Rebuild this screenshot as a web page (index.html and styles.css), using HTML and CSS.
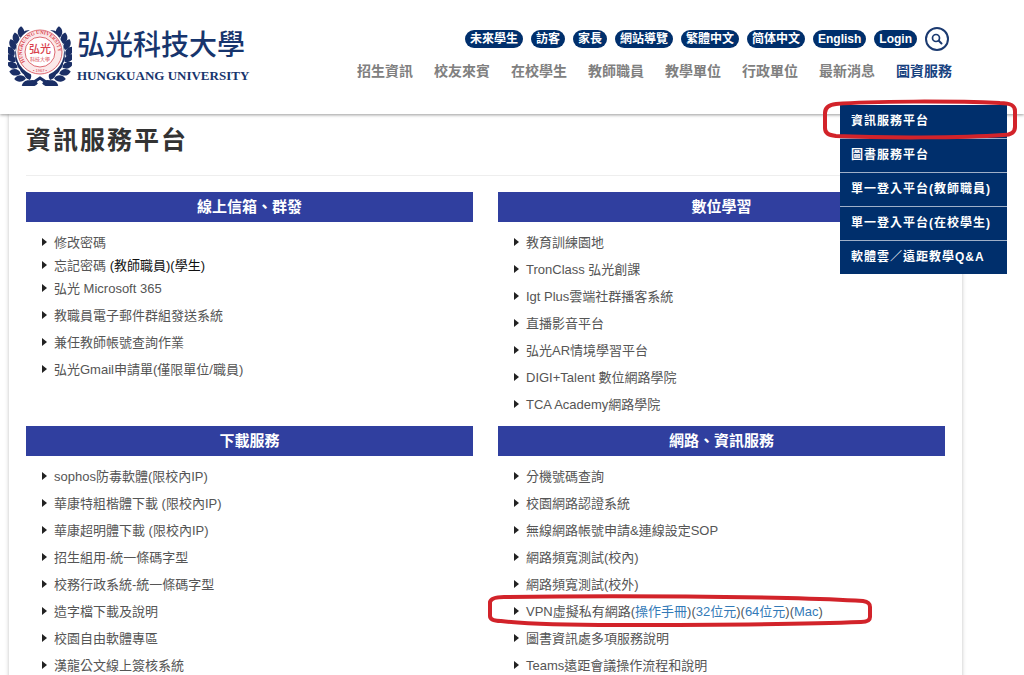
FILE: index.html
```html
<!DOCTYPE html>
<html lang="zh-Hant">
  <head>
    <meta charset="UTF-8" />
    <meta name="viewport" content="width=device-width, initial-scale=1.0" />
    <title>資訊服務平台</title>
    <link rel="stylesheet" href="styles.css">
  </head>
  <body>
    <header class="header">
      <a class="logo" href="#">
        <svg class="emblem" viewBox="0 0 64 62" aria-hidden="true">
          <defs>
            <path id="ring" d="M17 38 A18 18 0 1 1 47 38" />
            <path id="leaf" d="M0 1 C-5 0 -8 -4 -6 -9 C-1 -9 3 -4 0 1 Z" />
            <g id="branch" fill="#1b2f66">
              <use href="#leaf" transform="translate(29 59) rotate(-60)" />
              <use href="#leaf" transform="translate(24 58) rotate(-75)" />
              <use href="#leaf" transform="translate(17 54) rotate(-62)" />
              <use href="#leaf" transform="translate(12 49) rotate(-48)" />
              <use href="#leaf" transform="translate(9 43) rotate(-34)" />
              <use href="#leaf" transform="translate(7 37) rotate(-20)" />
              <use href="#leaf" transform="translate(6 31) rotate(-6)" />
              <use href="#leaf" transform="translate(7 25) rotate(8)" />
              <use href="#leaf" transform="translate(9 19) rotate(22)" />
              <use href="#leaf" transform="translate(13 13) rotate(34)" />
              <use href="#leaf" transform="translate(22 55) rotate(5)" />
              <use href="#leaf" transform="translate(17 50) rotate(15)" />
              <use href="#leaf" transform="translate(13 45) rotate(25)" />
              <use href="#leaf" transform="translate(10 39) rotate(38)" />
              <use href="#leaf" transform="translate(9 33) rotate(52)" />
              <use href="#leaf" transform="translate(9 27) rotate(66)" />
              <use href="#leaf" transform="translate(11 20) rotate(76)" />
              <use href="#leaf" transform="translate(14 14) rotate(80)" />
            </g>
          </defs>
          <use href="#branch" />
          <use href="#branch" transform="translate(64 0) scale(-1 1)" />
          <path d="M23 60 L32 54 L41 60" fill="none" stroke="#1b2f66" stroke-width="3" />
          <circle cx="32" cy="28" r="24" fill="#fff" />
          <circle cx="32" cy="28" r="22" fill="#fbe9ea" stroke="#dd6a72" stroke-width="1" />
          <circle cx="32" cy="28" r="15" fill="#fff" stroke="#dd6a72" stroke-width="1" />
          <text class="ring-text"><textPath href="#ring">HUNGKUANG UNIVERSITY</textPath></text>
          <text class="year" x="32" y="48">• 1967 •</text>
          <text class="seal" x="32" y="29">弘光</text>
          <text class="seal-sub" x="32" y="37">科技大學</text>
        </svg>
        <span class="school">
          <span class="school-zh">弘光科技大學</span>
          <span class="school-en">HUNGKUANG UNIVERSITY</span>
        </span>
      </a>
      <div class="menus">
        <div class="top-links">
          <a href="#">未來學生</a>
          <a href="#">訪客</a>
          <a href="#">家長</a>
          <a href="#">網站導覽</a>
          <a href="#">繁體中文</a>
          <a href="#">简体中文</a>
          <a href="#">English</a>
          <a href="#">Login</a>
          <button class="search" type="button" aria-label="搜尋">
            <svg viewBox="0 0 12 12" width="12" height="12">
              <circle cx="5" cy="5" r="3.5" fill="none" stroke="#1b3a70" stroke-width="1.7" />
              <path d="M7.8 7.8 L10.5 10.5" stroke="#1b3a70" stroke-width="2" stroke-linecap="round" />
            </svg>
          </button>
        </div>
        <nav>
          <ul class="main-nav">
            <li><a href="#">招生資訊</a></li>
            <li><a href="#">校友來賓</a></li>
            <li><a href="#">在校學生</a></li>
            <li><a href="#">教師職員</a></li>
            <li><a href="#">教學單位</a></li>
            <li><a href="#">行政單位</a></li>
            <li><a href="#">最新消息</a></li>
            <li class="active">
              <a href="#">圖資服務</a>
              <ul class="dropdown">
                <li><a href="#">資訊服務平台</a>
                  <svg class="mark mark-menu" viewBox="0 0 196 42" aria-hidden="true">
                    <path d="M14 5 C50 2 130 2 178 4 C190 4 193 7 193 12 L193 28 C193 33 190 36 181 36 C140 39 60 39 14 37 C6 36 3 34 3 29 L3 14 C3 9 6 6 14 5 Z" />
                  </svg>
                </li>
                <li><a href="#">圖書服務平台</a></li>
                <li><a href="#">單一登入平台(教師職員)</a></li>
                <li><a href="#">單一登入平台(在校學生)</a></li>
                <li><a href="#">軟體雲／遠距教學Q&amp;A</a></li>
              </ul>
            </li>
          </ul>
        </nav>
      </div>
    </header>

    <main class="container">
      <h1>資訊服務平台</h1>
      <div class="grid">
        <section>
          <h2>線上信箱、群發</h2>
          <ul class="list">
            <li><a href="#">修改密碼</a></li>
            <li class="tight"><a href="#">忘記密碼</a><span class="who"> (<a href="#">教師職員</a>)(<a href="#">學生</a>)</span></li>
            <li><a href="#">弘光 Microsoft 365</a></li>
            <li><a href="#">教職員電子郵件群組發送系統</a></li>
            <li><a href="#">兼任教師帳號查詢作業</a></li>
            <li><a href="#">弘光Gmail申請單(僅限單位/職員)</a></li>
          </ul>
        </section>
        <section>
          <h2>數位學習</h2>
          <ul class="list">
            <li><a href="#">教育訓練園地</a></li>
            <li><a href="#">TronClass 弘光創課</a></li>
            <li><a href="#">Igt Plus雲端社群播客系統</a></li>
            <li><a href="#">直播影音平台</a></li>
            <li><a href="#">弘光AR情境學習平台</a></li>
            <li><a href="#">DIGI+Talent 數位網路學院</a></li>
            <li><a href="#">TCA Academy網路學院</a></li>
          </ul>
        </section>
        <section>
          <h2>下載服務</h2>
          <ul class="list">
            <li><a href="#">sophos防毒軟體(限校內IP)</a></li>
            <li><a href="#">華康特粗楷體下載 (限校內IP)</a></li>
            <li><a href="#">華康超明體下載 (限校內IP)</a></li>
            <li><a href="#">招生組用-統一條碼字型</a></li>
            <li><a href="#">校務行政系統-統一條碼字型</a></li>
            <li><a href="#">造字檔下載及說明</a></li>
            <li><a href="#">校園自由軟體專區</a></li>
            <li><a href="#">漢龍公文線上簽核系統</a></li>
          </ul>
        </section>
        <section>
          <h2>網路、資訊服務</h2>
          <ul class="list">
            <li><a href="#">分機號碼查詢</a></li>
            <li><a href="#">校園網路認證系統</a></li>
            <li><a href="#">無線網路帳號申請&amp;連線設定SOP</a></li>
            <li><a href="#">網路頻寬測試(校內)</a></li>
            <li><a href="#">網路頻寬測試(校外)</a></li>
            <li class="vpn">
              <span>VPN虛擬私有網路(<a href="#">操作手冊</a>)(<a href="#">32位元</a>)(<a href="#">64位元</a>)(<a href="#">Mac</a>)</span>
              <svg class="mark mark-vpn" viewBox="0 0 386 36" aria-hidden="true">
                <path d="M17 4 C80 3 200 3 300 5 C340 6 360 7 376 8 C382 9 383 11 383 14 L383 24 C383 27 380 29 374 29 C300 32 200 32 130 32 C80 32 40 31 14 28 C6 28 3 26 3 23 L3 9 C4 5 9 4 17 4 Z" />
              </svg>
            </li>
            <li><a href="#">圖書資訊處多項服務說明</a></li>
            <li><a href="#">Teams遠距會議操作流程和說明</a></li>
          </ul>
        </section>
      </div>
    </main>
  </body>
</html>
```
FILE: styles.css
```css
* {
  box-sizing: border-box;
}
body {
  margin: 0;
  height: 100vh;
  overflow: hidden;
  background-color: #fff;
  color: #555;
  font-family: "Liberation Sans", "Noto Sans CJK TC", sans-serif;
  font-size: 13px;
}
ul {
  list-style: none;
  margin: 0;
  padding: 0;
}
a {
  color: inherit;
  text-decoration: none;
}

.header {
  position: relative;
  z-index: 2;
  display: flex;
  justify-content: space-between;
  align-items: flex-start;
  height: 114px;
  padding: 24px 72px 0 8px;
  background-color: #fff;
  box-shadow: 0 1px 3px rgba(0, 0, 0, 0.4);
}
.logo {
  display: flex;
  gap: 5px;
  color: #17356d;
}
.emblem {
  width: 64px;
  height: 62px;
}
.emblem text {
  fill: #d8404c;
  text-anchor: middle;
}
.emblem .ring-text {
  font-family: "Liberation Serif", serif;
  font-size: 5px;
  font-weight: bold;
  text-anchor: start;
}
.emblem .year {
  font-size: 4px;
}
.emblem .seal {
  font-size: 11px;
  font-weight: 500;
}
.emblem .seal-sub {
  font-size: 5px;
}
.school {
  display: flex;
  flex-direction: column;
}
.school-zh {
  font-size: 28px;
  font-weight: 500;
  line-height: 44px;
}
.school-en {
  font-family: "Liberation Serif", serif;
  font-size: 13px;
  line-height: 16px;
  font-weight: bold;
}

.menus {
  display: flex;
  flex-direction: column;
  align-items: flex-end;
}
.top-links {
  display: flex;
  align-items: center;
  gap: 8px;
  height: 30px;
  padding-right: 3px;
}
.top-links a {
  padding: 0 5px;
  border-radius: 9px;
  background-color: #002f6c;
  color: #fff;
  font-size: 12px;
  font-weight: bold;
  line-height: 18px;
}
.search {
  display: flex;
  align-items: center;
  justify-content: center;
  width: 24px;
  height: 24px;
  padding: 0;
  border: 2px solid #1b3a70;
  border-radius: 50%;
  background: none;
  cursor: pointer;
}
.main-nav {
  display: flex;
  gap: 21px;
  color: #808080;
  font-size: 14px;
  font-weight: bold;
  line-height: 34px;
}
.main-nav .active {
  position: relative;
  color: #17427f;
}
.dropdown {
  position: absolute;
  top: 51px;
  right: -55px;
  width: 167px;
  background-color: #002f6c;
  color: #fff;
  font-size: 12px;
  line-height: 33px;
  letter-spacing: 1px;
}
.dropdown li {
  position: relative;
  padding-left: 11px;
  white-space: nowrap;
}
.dropdown li + li {
  border-top: 1px solid #9fb0c8;
}
.mark {
  position: absolute;
  z-index: 1;
  fill: none;
  stroke: #d2232a;
  stroke-width: 4;
  pointer-events: none;
}
.mark-menu {
  top: -6px;
  left: -18px;
  width: 196px;
  height: 42px;
}

.container {
  margin: 0 62px 0 9px;
  padding: 0 17px;
  box-shadow: 0 0 4px rgba(0, 0, 0, 0.25);
}
h1 {
  margin: 0 0 16px;
  padding: 8px 0 17px;
  border-bottom: 1px solid #eee;
  color: #333;
  font-size: 25px;
  line-height: 36px;
  letter-spacing: 2px;
}
.grid {
  display: grid;
  grid-template-columns: 1fr 1fr;
  column-gap: 25px;
  row-gap: 9px;
}
h2 {
  margin: 0;
  background-color: #303f9f;
  color: #fff;
  font-size: 15px;
  line-height: 30px;
  text-align: center;
}
.list {
  padding: 6px 0 0 16px;
}
.list li {
  position: relative;
  display: flex;
  align-items: center;
  height: 27px;
}
.list li::before {
  content: "";
  margin-right: 7px;
  border: 4px solid transparent;
  border-left: 5px solid #222;
  border-right: none;
}
.list .tight {
  height: 19px;
}
.who {
  color: #111;
  white-space: pre;
}
.vpn a {
  color: #337ab7;
}
.mark-vpn {
  top: -4px;
  left: -27px;
  width: 386px;
  height: 36px;
}
```
